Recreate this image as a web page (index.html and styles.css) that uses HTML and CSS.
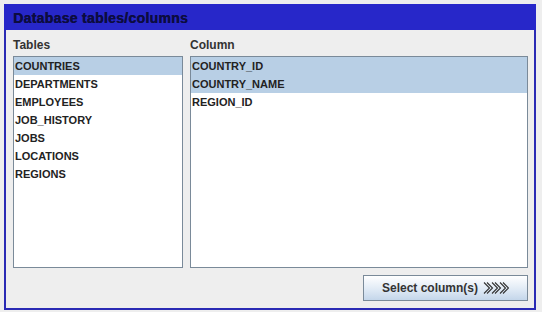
FILE: index.html
```html
<!DOCTYPE html>
<html lang="en">
<head>
  <meta charset="UTF-8">
  <title>Database tables/columns</title>
  <link rel="stylesheet" href="styles.css">
</head>
<body>
  <div class="panel">
    <div class="title">Database tables/columns</div>
    <div class="content">
      <div class="lists">
        <div class="col col-tables">
          <div class="label">Tables</div>
          <ul class="list">
            <li class="selected">COUNTRIES</li>
            <li>DEPARTMENTS</li>
            <li>EMPLOYEES</li>
            <li>JOB_HISTORY</li>
            <li>JOBS</li>
            <li>LOCATIONS</li>
            <li>REGIONS</li>
          </ul>
        </div>
        <div class="col col-columns">
          <div class="label">Column</div>
          <ul class="list">
            <li class="selected">COUNTRY_ID</li>
            <li class="selected">COUNTRY_NAME</li>
            <li>REGION_ID</li>
          </ul>
        </div>
      </div>
      <div class="actions">
        <button class="btn">Select column(s)
          <svg class="arrows" width="26" height="14" viewBox="0 0 26 14">
            <path d="M1 1.5 L6.5 7 L1 12.5 M4 1.5 L9.5 7 L4 12.5" fill="none" stroke="#333" stroke-width="1.1"/>
            <path d="M9 1.5 L14.5 7 L9 12.5 M12 1.5 L17.5 7 L12 12.5" fill="none" stroke="#333" stroke-width="1.1"/>
            <path d="M17 1.5 L22.5 7 L17 12.5 M20 1.5 L25.5 7 L20 12.5" fill="none" stroke="#333" stroke-width="1.1"/>
          </svg>
        </button>
      </div>
    </div>
  </div>
</body>
</html>
```

FILE: styles.css
```css
body {
  margin: 0;
  padding: 4px 6px 2px 4px;
  background-color: #eeeeee;
  font-family: "Liberation Sans", Arial, sans-serif;
  font-weight: bold;
  color: #222222;
}
.panel {
  border: 2px solid #2a2ab4;
  border-top: none;
  height: 306px;
  box-sizing: border-box;
  display: flex;
  flex-direction: column;
}
.title {
  background-color: #2727c9;
  color: #0c0c40;
  font-size: 14px;
  letter-spacing: 0.3px;
  text-shadow: 0.4px 0 #0c0c40;
  height: 26px;
  line-height: 28px;
  margin: 0 -2px;
  padding-left: 9px;
}
.content {
  flex: 1;
  padding: 7px 6px 0 7px;
  display: flex;
  flex-direction: column;
}
.lists {
  display: flex;
  gap: 7px;
}
.col-tables {
  width: 170px;
}
.col-columns {
  flex: 1;
}
.label {
  font-size: 12px;
  height: 17px;
  line-height: 17px;
  color: #333333;
}
.list {
  list-style: none;
  margin: 2px 0 0 0;
  padding: 0;
  height: 212px;
  background: #ffffff;
  border: 1px solid #7a8a99;
  box-sizing: border-box;
}
.list li {
  font-size: 11px;
  height: 18px;
  line-height: 18px;
  padding-left: 1px;
}
.list li.selected {
  background-color: #b8cfe5;
}
.actions {
  display: flex;
  justify-content: flex-end;
  margin-top: 7px;
}
.btn {
  width: 165px;
  height: 26px;
  border: 1px solid #7a8a99;
  background: linear-gradient(#ffffff, #dde8f4 60%, #c4d6ea);
  font-family: "Liberation Sans", Arial, sans-serif;
  font-weight: bold;
  font-size: 12px;
  color: #333333;
  display: flex;
  align-items: center;
  justify-content: center;
  gap: 5px;
  padding: 0;
}
.arrows {
  display: block;
}
```
